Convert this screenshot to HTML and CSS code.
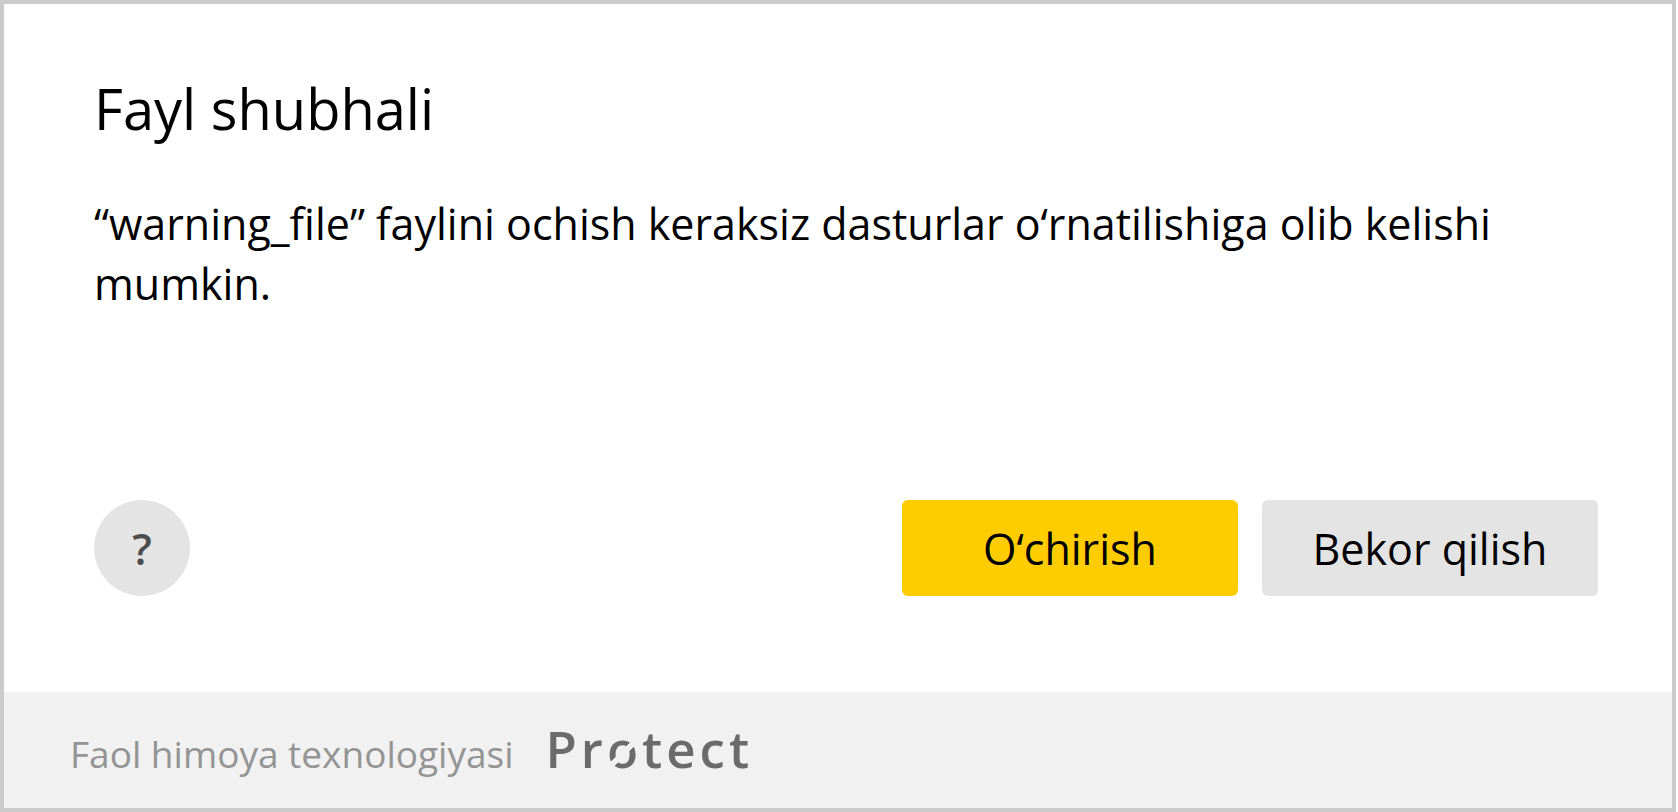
FILE: index.html
```html
<!DOCTYPE html>
<html lang="uz">
<head>
    <meta charset="UTF-8">
    <meta name="viewport" content="width=device-width, initial-scale=1.0">
    <title>Fayl shubhali</title>
    <link rel="stylesheet" href="styles.css">
</head>
<body>
    <div class="dialog" role="dialog" aria-labelledby="dialogTitle">
        <div class="content">
            <h1 class="title" id="dialogTitle">Fayl shubhali</h1>
            <p class="message">“warning_file” faylini ochish keraksiz dasturlar o‘rnatilishiga olib kelishi mumkin.</p>
            <div class="actions">
                <button type="button" class="btn-help">?</button>
                <button type="button" class="btn btn-delete">O‘chirish</button>
                <button type="button" class="btn">Bekor qilish</button>
            </div>
        </div>
        <div class="footer">
            <span class="tech">Faol himoya texnologiyasi</span>
            <span class="logo">Pr<span class="logo-ring">o</span>tect</span>
        </div>
    </div>
</body>
</html>
```
FILE: styles.css
```css
* {
    box-sizing: border-box;
}

body {
    margin: 0 2px 0 0;
    background: white;
    color: black;
    font-family: "Open Sans", "Noto Sans", sans-serif;
}

.dialog {
    display: flex;
    flex-direction: column;
    min-height: 100vh;
    border: 4px solid #cbcbcb;
}

.content {
    flex: 1;
    display: flex;
    flex-direction: column;
    padding: 62px 74px 96px 90px;
}

.title {
    margin: 0;
    font-size: 56px;
    line-height: 84px;
    font-weight: 400;
}

.message {
    margin: 44px 0 40px;
    font-size: 43px;
    line-height: 60px;
}

.actions {
    display: flex;
    align-items: center;
    gap: 24px;
    margin-top: auto;
}

.btn, .btn-help {
    height: 96px;
    padding: 0;
    border: 0;
    background: #e4e4e4;
    color: black;
    font-family: inherit;
    font-size: 43px;
    cursor: pointer;
}

.btn {
    width: 336px;
    border-radius: 6px;
}

.btn-delete {
    background: #ffcc00;
}

.btn-help {
    width: 96px;
    margin-right: auto;
    border-radius: 50%;
    color: #4d4d4d;
    font-weight: 600;
}

.footer {
    display: flex;
    align-items: baseline;
    gap: 32px;
    padding: 26px 66px 24px;
    background: #f1f1f1;
    line-height: 60px;
}

.tech {
    color: #949494;
    font-size: 37px;
}

.logo {
    color: #6b6b6b;
    font-size: 51px;
    font-weight: 600;
    letter-spacing: 4px;
}

/* the o is a ring cut by a diagonal slit */
.logo-ring {
    background: linear-gradient(135deg, #6b6b6b 50%, transparent 50%, transparent 58%, #6b6b6b 58%);
    -webkit-background-clip: text;
    background-clip: text;
    color: transparent;
}
```
